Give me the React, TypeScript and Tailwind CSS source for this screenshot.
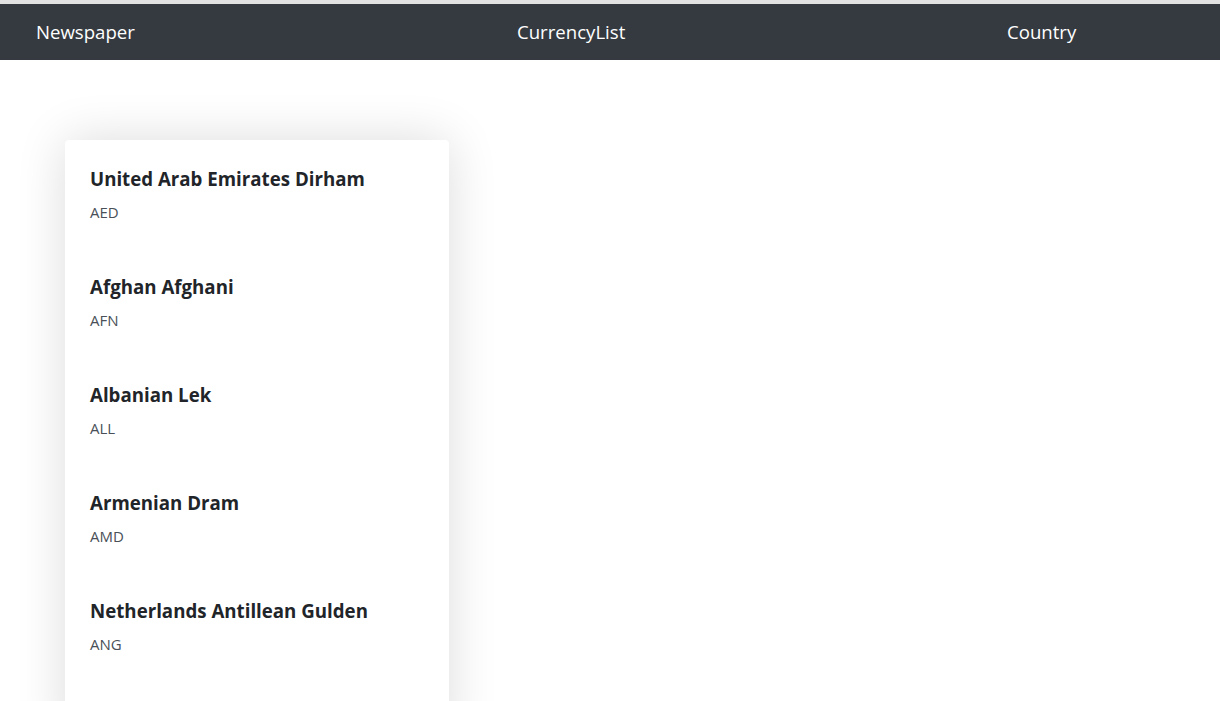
const currencies = [
  { name: "United Arab Emirates Dirham", code: "AED" },
  { name: "Afghan Afghani", code: "AFN" },
  { name: "Albanian Lek", code: "ALL" },
  { name: "Armenian Dram", code: "AMD" },
  { name: "Netherlands Antillean Gulden", code: "ANG" },
];

export default function App() {
  return (
    <div className="h-screen overflow-hidden bg-white font-['Open_Sans',sans-serif] text-[#212529]">
      <div className="h-1 bg-[#e2e2e2]" />
      <nav className="flex h-14 items-center bg-[#343a40] text-[18.6px] text-white">
        <a href="#" className="w-[517px] pl-9">
          Newspaper
        </a>
        <a href="#" className="w-[490px]">
          CurrencyList
        </a>
        <a href="#">Country</a>
      </nav>
      <main className="pl-[65px] pt-20">
        <div className="w-[384px] rounded bg-white pb-16 shadow-[0_0_50px_rgba(0,0,0,0.14)]">
          {currencies.map((c) => (
            <div key={c.code} className="px-[25px] py-6">
              <h5 className="mb-[7px] text-[18.7px] leading-[30px] font-bold">
                {c.name}
              </h5>
              <p className="text-[15px] leading-[23px] text-[#495057]">
                {c.code}
              </p>
            </div>
          ))}
        </div>
      </main>
    </div>
  );
}
